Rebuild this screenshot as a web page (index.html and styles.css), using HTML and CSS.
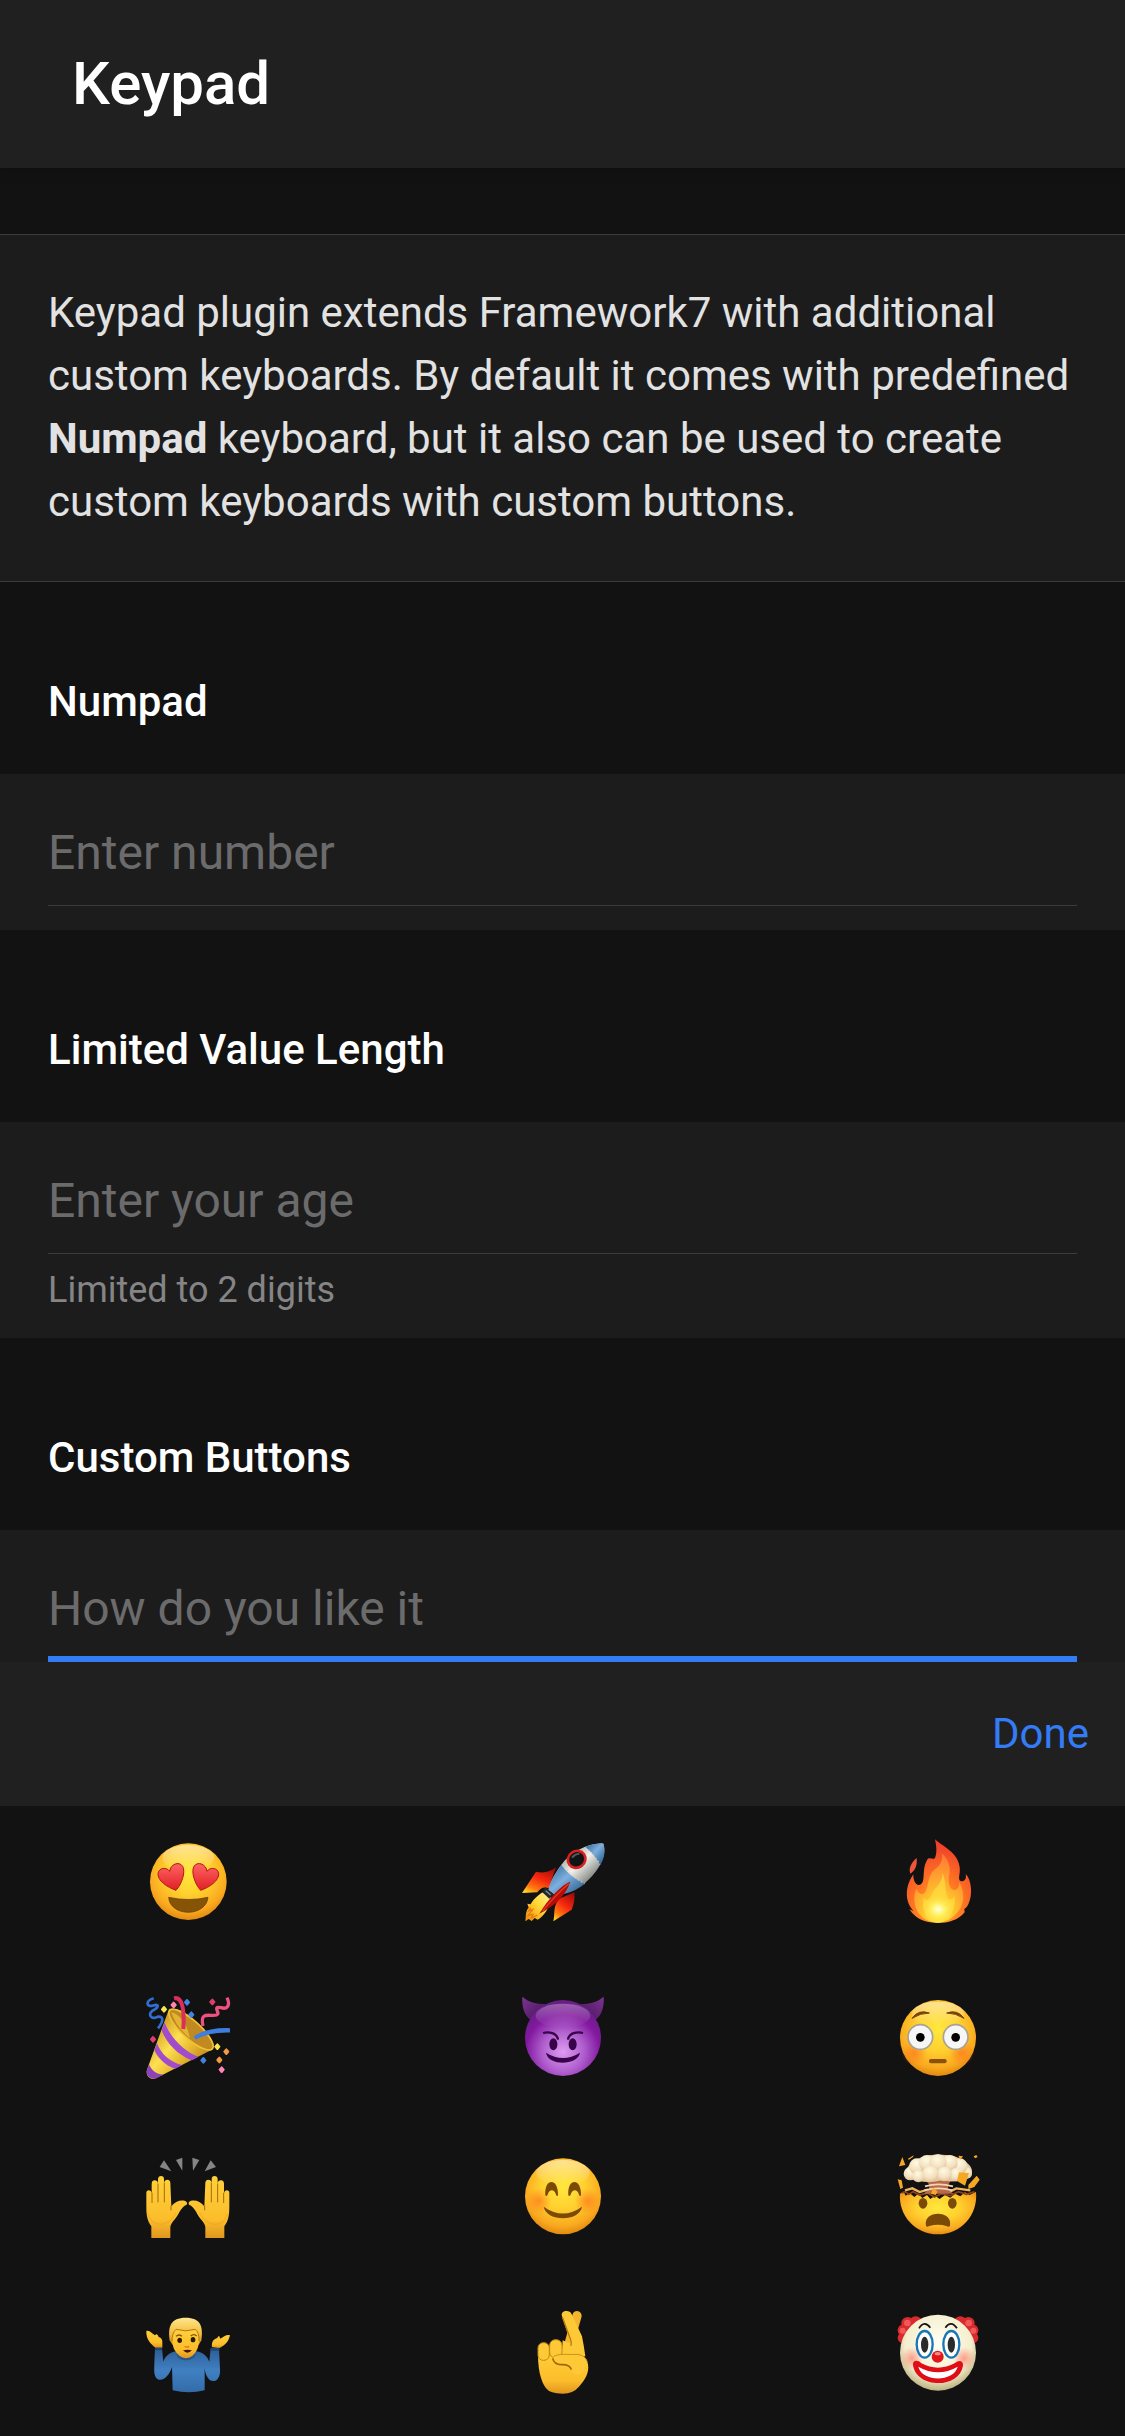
FILE: index.html
```html
<!DOCTYPE html>
<html lang="en">
<head>
    <meta charset="UTF-8">
    <meta name="viewport" content="width=device-width, initial-scale=1.0">
    <title>Keypad</title>
    <link rel="stylesheet" href="styles.css">
</head>
<body>
    <!-- gradients shared by the emoji buttons -->
    <svg class="defs" aria-hidden="true">
        <defs>
            <radialGradient id="face" cx="0.5" cy="0.38" r="0.64">
                <stop offset="0" stop-color="#ffe83c"/>
                <stop offset="0.45" stop-color="#ffd02f"/>
                <stop offset="0.8" stop-color="#faa91f"/>
                <stop offset="1" stop-color="#dc8410"/>
            </radialGradient>
            <linearGradient id="shine" x1="0" y1="0" x2="0" y2="1">
                <stop offset="0" stop-color="#fff" stop-opacity="0.5"/>
                <stop offset="1" stop-color="#fff" stop-opacity="0"/>
            </linearGradient>
            <radialGradient id="cheek">
                <stop offset="0" stop-color="#ff6a1c" stop-opacity="0.6"/>
                <stop offset="1" stop-color="#ff6a1c" stop-opacity="0"/>
            </radialGradient>
            <linearGradient id="heart" x1="0" y1="0" x2="0" y2="1">
                <stop offset="0" stop-color="#ff6464"/>
                <stop offset="1" stop-color="#e01f26"/>
            </linearGradient>
            <linearGradient id="cone" x1="0" y1="0.3" x2="0.8" y2="1">
                <stop offset="0" stop-color="#c58a18"/>
                <stop offset="0.4" stop-color="#ffe052"/>
                <stop offset="0.65" stop-color="#e4b52d"/>
                <stop offset="1" stop-color="#a97018"/>
            </linearGradient>
            <linearGradient id="hull" x1="0.2" y1="0.2" x2="0.75" y2="0.75">
                <stop offset="0" stop-color="#8d9494"/>
                <stop offset="0.5" stop-color="#f2f2ec"/>
                <stop offset="1" stop-color="#777c7a"/>
            </linearGradient>
            <linearGradient id="steel" x1="0" y1="0" x2="1" y2="1">
                <stop offset="0" stop-color="#2d6092"/>
                <stop offset="0.45" stop-color="#7db0de"/>
                <stop offset="1" stop-color="#1d4f80"/>
            </linearGradient>
            <linearGradient id="fin" x1="0.8" y1="0" x2="0.2" y2="1">
                <stop offset="0" stop-color="#a30c08"/>
                <stop offset="0.45" stop-color="#f7290f"/>
                <stop offset="0.8" stop-color="#ff7a10"/>
                <stop offset="1" stop-color="#ffd026"/>
            </linearGradient>
            <linearGradient id="jet" x1="1" y1="0" x2="0" y2="1">
                <stop offset="0" stop-color="#fff3a0"/>
                <stop offset="0.5" stop-color="#ffd52e"/>
                <stop offset="1" stop-color="#f08a10"/>
            </linearGradient>
            <radialGradient id="devil" cx="0.5" cy="0.68" r="0.68">
                <stop offset="0" stop-color="#dc9cf0"/>
                <stop offset="0.4" stop-color="#b05fce"/>
                <stop offset="0.72" stop-color="#82189f"/>
                <stop offset="1" stop-color="#642081"/>
            </radialGradient>
            <linearGradient id="horn" x1="0" y1="0" x2="1" y2="1">
                <stop offset="0" stop-color="#7d3492"/>
                <stop offset="1" stop-color="#431257"/>
            </linearGradient>
            <radialGradient id="fire" cx="0.5" cy="0.85" r="0.8">
                <stop offset="0" stop-color="#ffb52e"/>
                <stop offset="0.45" stop-color="#ff7a22"/>
                <stop offset="1" stop-color="#f03e2b"/>
            </radialGradient>
            <radialGradient id="ember" cx="0.5" cy="0.9" r="0.85">
                <stop offset="0" stop-color="#fff34a"/>
                <stop offset="0.4" stop-color="#ffc02c"/>
                <stop offset="1" stop-color="#ff7c34"/>
            </radialGradient>
            <radialGradient id="glow">
                <stop offset="0" stop-color="#ffffe6"/>
                <stop offset="0.4" stop-color="#fff56e" stop-opacity="0.9"/>
                <stop offset="1" stop-color="#ffe03a" stop-opacity="0"/>
            </radialGradient>
            <linearGradient id="skin" x1="0" y1="0" x2="0" y2="1">
                <stop offset="0" stop-color="#ffd03a"/>
                <stop offset="0.7" stop-color="#fcbd2b"/>
                <stop offset="1" stop-color="#df961f"/>
            </linearGradient>
            <linearGradient id="hair" x1="0" y1="0" x2="0" y2="1">
                <stop offset="0" stop-color="#ffe78a"/>
                <stop offset="0.6" stop-color="#f2bc3c"/>
                <stop offset="1" stop-color="#c98a1b"/>
            </linearGradient>
            <linearGradient id="shirt" x1="0" y1="0" x2="0" y2="1">
                <stop offset="0" stop-color="#2d5d96"/>
                <stop offset="0.5" stop-color="#4080c2"/>
                <stop offset="1" stop-color="#336ba8"/>
            </linearGradient>
            <radialGradient id="puff" cx="0.45" cy="0.3" r="0.75">
                <stop offset="0" stop-color="#fffae2"/>
                <stop offset="0.6" stop-color="#f3e1c0"/>
                <stop offset="1" stop-color="#dcbc94"/>
            </radialGradient>
            <radialGradient id="clown" cx="0.5" cy="0.4" r="0.62">
                <stop offset="0" stop-color="#fffff4"/>
                <stop offset="0.7" stop-color="#f5efcf"/>
                <stop offset="1" stop-color="#b5ab78"/>
            </radialGradient>
            <radialGradient id="blush">
                <stop offset="0" stop-color="#ff7a6a" stop-opacity="0.7"/>
                <stop offset="1" stop-color="#ff7a6a" stop-opacity="0"/>
            </radialGradient>
        </defs>
    </svg>

    <div class="page">
        <header class="navbar">
            <h1 class="navbar-title">Keypad</h1>
        </header>

        <main class="page-content">
            <div class="block">
                <p>Keypad plugin extends Framework7 with additional custom keyboards. By default it comes with predefined <b>Numpad</b> keyboard, but it also can be used to create custom keyboards with custom buttons.</p>
            </div>

            <label class="block-title" for="numpad">Numpad</label>
            <div class="list">
                <input type="text" id="numpad" class="item-input" placeholder="Enter number" readonly>
            </div>

            <label class="block-title" for="age">Limited Value Length</label>
            <div class="list">
                <input type="text" id="age" class="item-input" placeholder="Enter your age" maxlength="2" aria-describedby="ageInfo" readonly>
                <div class="item-info" id="ageInfo">Limited to 2 digits</div>
            </div>

            <label class="block-title" for="custom">Custom Buttons</label>
            <div class="list">
                <input type="text" id="custom" class="item-input item-input-focused" placeholder="How do you like it" readonly>
            </div>
        </main>

        <section class="keypad" aria-label="Custom keypad">
            <div class="toolbar">
                <a href="#" class="link">Done</a>
            </div>
            <div class="keypad-buttons">
                <button type="button" class="keypad-button" aria-label="Heart eyes">
                    <svg class="emoji" viewBox="60 50 288 288">
                        <circle cx="205" cy="184" r="115" fill="url(#face)"/>
                        <ellipse cx="205" cy="112" rx="78" ry="38" fill="url(#shine)"/>
                        <path id="eyeHeart" d="M168 210C142 201 112 181 114 159C117 141 141 140 149 153C151 132 177 121 188 138C198 156 184 193 168 210Z" fill="url(#heart)" stroke="#b3160f" stroke-width="3"/>
                        <use href="#eyeHeart" transform="translate(410 0) scale(-1 1)"/>
                        <path d="M146 231Q205 244 264 231C262 258 235 276 205 276C174 276 147 258 146 231Z" fill="#855407" stroke="#5e3a04" stroke-width="2"/>
                    </svg>
                </button>
                <button type="button" class="keypad-button" aria-label="Rocket">
                    <svg class="emoji" viewBox="45 50 288 288">
                        <path d="M128 216C112 226 98 240 92 252L82 250L86 262C76 272 78 288 76 303L86 296L95 302L104 293L113 298C132 288 152 256 154 232Z" fill="url(#jet)"/>
                        <path d="M92 262L86 272L98 268L84 286L99 282L94 294L112 284" fill="none" stroke="#e87b0c" stroke-width="4"/>
                        <path d="M168 141C145 158 128 158 108 154L66 218L112 216Q126 196 146 204Z" fill="url(#fin)"/>
                        <path d="M223 216Q226 244 215 268L160 303C166 276 158 262 176 236Z" fill="url(#fin)"/>
                        <path d="M136 200L162 222L148 235L127 216Z" fill="#20292e"/>
                        <path d="M137 211L152 224" stroke="#7e8a90" stroke-width="4"/>
                        <path d="M310 70C270 66 212 92 182 136C162 163 148 190 146 208L166 224C204 220 242 202 264 180C302 142 320 105 310 70Z" fill="url(#hull)"/>
                        <path d="M184 134C162 165 148 190 146 208L166 224C200 221 230 211 254 190Q212 172 184 134Z" fill="url(#steel)"/>
                        <path d="M310 70C292 68 274 72 256 80Q283 102 301 134C316 108 316 86 310 70Z" fill="url(#steel)"/>
                        <path d="M187 132Q214 170 254 190M256 82Q282 102 300 132" fill="none" stroke="#d3cfae" stroke-width="4" stroke-dasharray="3 8"/>
                        <path d="M211 184C186 193 146 232 118 280C158 260 196 230 211 184Z" fill="#b40d08"/>
                        <path d="M206 190Q164 226 128 272" fill="none" stroke="#e83a20" stroke-width="4"/>
                        <ellipse cx="230" cy="117" rx="27" ry="25" transform="rotate(-35 230 117)" fill="#101414" stroke="#d92020" stroke-width="8"/>
                        <path d="M216 112Q224 101 238 100" fill="none" stroke="#515b5b" stroke-width="6"/>
                    </svg>
                </button>
                <button type="button" class="keypad-button" aria-label="Fire">
                    <svg class="emoji" viewBox="45 50 288 288">
                        <path d="M125 113C108 127 100 145 106 160C122 150 127 133 125 113Z" fill="#f0553a"/>
                        <path d="M180 57C205 80 248 96 254 140C257 162 246 178 258 183C270 184 275 174 272 161C290 178 294 224 280 252Q276 262 268 266L269 276C250 300 218 308 190 308C158 308 124 300 103 267L116 272C92 250 86 204 115 162C114 182 124 200 138 192C152 180 140 148 155 121C162 106 172 121 180 113C187 96 184 76 180 57Z" fill="url(#fire)"/>
                        <path d="M200 99C224 120 228 146 222 168C218 190 226 214 243 208C252 202 254 192 251 184C270 210 270 248 248 276Q224 305 190 307C154 307 124 286 119 248C116 226 120 214 125 206C132 226 148 226 154 208C162 184 160 164 178 148C198 136 204 118 200 99Z" fill="url(#ember)"/>
                        <path d="M203 158C216 190 208 212 218 232Q226 244 238 228C246 262 222 304 190 307C154 304 138 270 146 232Q156 248 168 228C174 204 202 194 203 158Z" fill="#ffe044" opacity="0.65"/>
                        <ellipse cx="190" cy="267" rx="48" ry="40" fill="url(#glow)"/>
                    </svg>
                </button>

                <button type="button" class="keypad-button" aria-label="Party popper">
                    <svg class="emoji" viewBox="60 523 288 288">
                        <path d="M147 568L81 750C76 768 92 782 108 776L274 691C292 678 270 650 240 620Q180 558 147 568Z" fill="url(#cone)"/>
                        <path d="M134 608C148 650 196 700 236 711L216 722C172 706 138 668 125 632Z" fill="#a04ccc"/>
                        <path d="M111 671C122 702 150 728 186 736L166 747C134 738 112 712 103 692Z" fill="#a04ccc"/>
                        <path d="M87 734C94 752 108 764 130 765L108 776C92 780 76 768 81 750Z" fill="#8e42ba"/>
                        <ellipse cx="213" cy="630" rx="86" ry="27" transform="rotate(42 213 630)" fill="#c08a20" stroke="#f0c23a" stroke-width="5"/>
                        <path d="M154 578Q196 590 210 656Q168 622 154 578Z" fill="#e3b433"/>
                        <path d="M162 536C186 530 194 566 190 628" fill="none" stroke="#db2e5a" stroke-width="12"/>
                        <path d="M224 655Q264 630 330 632" fill="none" stroke="#3f7ddf" stroke-width="13"/>
                        <path d="M101 536C76 544 78 562 98 558C122 550 114 566 97 573C80 588 98 600 114 591C136 590 126 610 114 626" fill="none" stroke="#326ed2" stroke-width="8"/>
                        <path d="M321 534C332 558 322 570 303 564C274 558 304 582 290 586C272 592 238 572 249 619" fill="none" stroke="#ee5081" stroke-width="10"/>
                        <g stroke-linejoin="round" stroke-width="6">
                            <path d="M201 541l6 7-6 7-6-7zM214 578l6 7-6 7-6-7zM250 715l6 7-6 7-6-7z" fill="#4184e4" stroke="#4184e4"/>
                            <path d="M132 562l6 7-6 7-6-7zM292 674l6 7-6 7-6-7z" fill="#f7e84b" stroke="#f7e84b"/>
                            <path d="M161 549l6 7-6 7-6-7zM305 743l6 7-6 7-6-7z" fill="#ff86b5" stroke="#ff86b5"/>
                            <path d="M277 540l6 7-6 7-6-7zM99 652l6 7-6 7-6-7z" fill="#dc3f68" stroke="#dc3f68"/>
                            <path d="M319 689l6 7-6 7-6-7zM298 714l6 7-6 7-6-7z" fill="#f39a40" stroke="#f39a40"/>
                        </g>
                    </svg>
                </button>
                <button type="button" class="keypad-button" aria-label="Smiling devil">
                    <svg class="emoji" viewBox="45 523 288 288">
                        <path id="hornLeft" d="M67 531C65 560 72 588 94 602L138 553C108 553 86 547 67 531Z" fill="url(#horn)"/>
                        <use href="#hornLeft" transform="translate(378 0) scale(-1 1)"/>
                        <circle cx="189" cy="655" r="114" fill="url(#devil)"/>
                        <ellipse cx="189" cy="588" rx="82" ry="36" fill="url(#shine)" opacity="0.6"/>
                        <path d="M129 640C146 635 172 640 174 660M249 640C232 635 206 640 204 660" fill="none" stroke="#390349" stroke-width="7"/>
                        <ellipse cx="160" cy="674" rx="12" ry="18" fill="#390349"/>
                        <ellipse cx="218" cy="674" rx="12" ry="18" fill="#390349"/>
                        <path d="M138 699Q189 731 240 699C234 738 144 740 138 699Z" fill="#390349"/>
                    </svg>
                </button>
                <button type="button" class="keypad-button" aria-label="Flushed face">
                    <svg class="emoji" viewBox="45 523 288 288">
                        <circle cx="189" cy="655" r="114" fill="url(#face)"/>
                        <ellipse cx="189" cy="582" rx="78" ry="36" fill="url(#shine)"/>
                        <circle cx="118" cy="700" r="38" fill="url(#cheek)"/>
                        <circle cx="260" cy="700" r="38" fill="url(#cheek)"/>
                        <path d="M111 596Q130 568 163 580Q136 580 111 596ZM267 596Q248 568 215 580Q242 580 267 596Z" fill="#764207" stroke="#764207" stroke-width="3"/>
                        <circle cx="136" cy="652" r="37" fill="#f6f6f6" stroke="#a5a299" stroke-width="5"/>
                        <circle cx="242" cy="652" r="37" fill="#f6f6f6" stroke="#a5a299" stroke-width="5"/>
                        <circle cx="136" cy="653" r="13"/>
                        <circle cx="242" cy="653" r="13"/>
                        <rect x="162" y="718" width="53" height="13" rx="6" fill="#8a520c"/>
                    </svg>
                </button>

                <button type="button" class="keypad-button" aria-label="Raising hands">
                    <svg class="emoji" viewBox="60 65 288 288">
                        <path d="M132 90L119 110L154 123ZM187 82L168 89L187 121ZM217 82L238 89L219 121ZM272 90L288 110L254 123Z" fill="#858585"/>
                        <g id="handLeft">
                            <path d="M94 323V288C82 272 79 255 79 230V188Q79 180 87 180Q94 180 95 188V160Q96 150 104 150Q113 150 114 160V147Q115 137 123 137Q132 137 132 147V157Q134 148 142 148Q151 149 151 158L154 228C165 213 180 208 194 211Q204 214 200 223C182 230 178 250 165 266Q152 280 151 290V323Z" fill="url(#skin)"/>
                            <path d="M96 187V218M114 160V216M133 157V216M153 226V240" fill="none" stroke="#a26b0c" stroke-width="3"/>
                            <path d="M84 248Q90 280 122 282Q151 280 168 248" fill="none" stroke="#eda21c" stroke-width="4" opacity="0.5"/>
                        </g>
                        <use href="#handLeft" transform="translate(407 0) scale(-1 1)"/>
                    </svg>
                </button>
                <button type="button" class="keypad-button" aria-label="Smiling face">
                    <svg class="emoji" viewBox="45 65 288 288">
                        <circle cx="189" cy="198" r="114" fill="url(#face)"/>
                        <ellipse cx="189" cy="127" rx="80" ry="38" fill="url(#shine)"/>
                        <circle cx="116" cy="212" r="38" fill="url(#cheek)"/>
                        <circle cx="262" cy="212" r="38" fill="url(#cheek)"/>
                        <path d="M136 195C132 142 176 142 174 195Q170 200 167 190C163 176 148 176 144 190Q141 200 136 195ZM205 195C201 142 245 142 243 195Q239 200 236 190C232 176 217 176 213 190Q210 200 205 195Z" fill="#7b4b06"/>
                        <path d="M131 229Q189 270 246 229C238 275 140 275 131 229Z" fill="#7b4b06"/>
                    </svg>
                </button>
                <button type="button" class="keypad-button" aria-label="Exploding head">
                    <svg class="emoji" viewBox="45 65 288 288">
                        <path d="M75 190L86 184L92 196L104 188L118 200L130 190L142 203L156 194L166 206L180 196L194 206L210 194L226 202L240 190L256 198L270 186L284 194L303 184C310 254 258 312 189 312C120 312 70 254 75 190Z" fill="url(#face)"/>
                        <path d="M80 188L90 184L102 192L114 184L134 194L158 188L178 200L200 190L226 196L250 184L274 192L298 184" fill="none" stroke="#8c441a" stroke-width="5"/>
                        <path d="M90 180L112 174L134 185L158 178M220 186L244 174L286 180" fill="none" stroke="#efb45e" stroke-width="7"/>
                        <path d="M146 146H232Q216 160 220 180L236 190H146L162 176Q168 160 146 146Z" fill="#b9694a"/>
                        <path d="M150 168Q190 156 234 168M148 180Q190 168 232 180" fill="none" stroke="#f2d6b6" stroke-width="5"/>
                        <path d="M92 140Q88 110 116 94Q150 70 189 74Q236 70 268 92Q300 112 288 140Q244 160 200 150Q150 164 92 140Z" fill="#e5c8a0"/>
                        <g fill="url(#puff)">
                            <circle cx="106" cy="130" r="20"/>
                            <circle cx="273" cy="128" r="18"/>
                            <circle cx="126" cy="108" r="24"/>
                            <circle cx="254" cy="108" r="24"/>
                            <circle cx="156" cy="98" r="24"/>
                            <circle cx="224" cy="98" r="24"/>
                            <circle cx="189" cy="97" r="26"/>
                            <circle cx="130" cy="138" r="18"/>
                            <circle cx="244" cy="133" r="20"/>
                            <circle cx="208" cy="131" r="22"/>
                            <circle cx="166" cy="131" r="24"/>
                        </g>
                        <path d="M82 80L72 108L91 104ZM98 86L116 75L114 80L102 88ZM68 147L80 150L84 172L76 176ZM252 126L282 128L270 166L246 152ZM280 164L305 136L314 148L298 170L280 176ZM250 76L264 78L256 88ZM296 78L304 74L308 80L300 84ZM174 172L188 184L182 194L168 190Z" fill="#f6a823"/>
                        <ellipse cx="144" cy="219" rx="13" ry="16" fill="#7b4b06"/>
                        <ellipse cx="232" cy="219" rx="13" ry="16" fill="#7b4b06"/>
                        <path d="M153 286C148 262 168 250 189 250C210 250 230 262 225 286Q222 292 214 287Q189 280 163 287Q155 292 153 286Z" fill="#7b4b06"/>
                    </svg>
                </button>

                <button type="button" class="keypad-button" aria-label="Man shrugging">
                    <svg class="emoji" viewBox="60 538 288 288">
                        <path d="M79 604C88 600 96 612 105 617C110 609 114 616 116 622C124 624 128 630 127 640V654H106C92 642 78 630 79 604Z" fill="url(#skin)"/>
                        <path d="M330 617C318 612 310 622 300 627C300 617 294 618 292 625C280 628 274 638 276 652L297 656C308 650 325 642 330 617Z" fill="url(#skin)"/>
                        <path d="M158 782L156 712C148 738 128 758 112 748C100 738 103 720 103 700L105 656H126L130 696C135 680 150 668 168 665H230C248 668 262 680 268 696L272 656H297L300 720C302 748 284 762 268 750Q256 738 254 715V782Q206 794 158 782Z" fill="url(#shirt)"/>
                        <path d="M105 654H126V662H105ZM272 654H298V663H272Z" fill="#22466f"/>
                        <path d="M166 665Q196 706 231 665L222 684Q197 700 174 684Z" fill="#29558a"/>
                        <path d="M149 632C143 590 152 564 197 564C242 564 250 590 244 632L236 646H158Z" fill="url(#hair)"/>
                        <path d="M157 614Q155 640 162 658Q176 684 198 686Q220 684 232 658Q239 640 237 612L226 600Q198 608 168 599Z" fill="url(#skin)"/>
                        <path d="M156 634Q156 610 168 599Q198 608 226 599Q238 608 237 634" fill="none" stroke="#b27814" stroke-width="3"/>
                        <path d="M168 620Q178 612 186 620M212 619Q222 611 230 619" fill="none" stroke="#865108" stroke-width="4"/>
                        <ellipse cx="179" cy="632" rx="7" ry="8" fill="#2b1a09"/>
                        <ellipse cx="219" cy="630" rx="7" ry="8" fill="#2b1a09"/>
                        <path d="M194 650Q200 655 207 650" fill="none" stroke="#d0811a" stroke-width="4"/>
                        <path d="M189 662Q203 658 216 662Q202 676 189 662Z" fill="#46120a"/>
                    </svg>
                </button>
                <button type="button" class="keypad-button" aria-label="Crossed fingers">
                    <svg class="emoji" viewBox="45 538 288 288">
                        <path d="M231 558L200 668" stroke="#f3b52c" stroke-width="28" stroke-linecap="round"/>
                        <path d="M186 560C180 540 212 540 215 554L246 620Q252 650 256 680L184 690L188 632Q202 640 212 640Z" fill="#fdc936"/>
                        <path d="M187 562L212 630Q216 648 211 648" fill="none" stroke="#b9780e" stroke-width="4"/>
                        <path d="M114 660Q112 740 138 776Q150 792 188 792Q220 792 236 772C256 750 268 730 264 704Q260 676 232 674H180Z" fill="url(#skin)"/>
                        <rect x="149" y="630" width="37" height="55" rx="17" fill="#fdc936" stroke="#c68616" stroke-width="3"/>
                        <rect x="114" y="639" width="34" height="53" rx="16" fill="#fdc936" stroke="#c68616" stroke-width="3"/>
                        <path d="M158 686C164 670 204 676 232 674C258 678 262 704 248 726C236 744 210 728 214 714Q208 704 180 704Q164 702 158 686Z" fill="#fdc936"/>
                        <path d="M158 686Q162 704 184 705Q210 704 214 720" fill="none" stroke="#a4660a" stroke-width="5"/>
                        <path d="M160 682C172 670 204 676 232 674Q254 676 262 696" fill="none" stroke="#cf9018" stroke-width="3"/>
                    </svg>
                </button>
                <button type="button" class="keypad-button" aria-label="Clown face">
                    <svg class="emoji" viewBox="45 538 288 288">
                        <g id="curls" fill="#d92a2e">
                            <circle cx="122" cy="580" r="20"/>
                            <circle cx="98" cy="581" r="19"/>
                            <circle cx="86" cy="602" r="18"/>
                            <circle cx="84" cy="624" r="16"/>
                            <circle cx="97" cy="580" r="10" fill="#f0585a"/>
                            <circle cx="83" cy="603" r="9" fill="#f0585a"/>
                        </g>
                        <use href="#curls" transform="translate(378 0) scale(-1 1)"/>
                        <circle cx="189" cy="669" r="114" fill="url(#clown)"/>
                        <circle cx="110" cy="686" r="34" fill="url(#blush)"/>
                        <circle cx="268" cy="686" r="34" fill="url(#blush)"/>
                        <path d="M132 596Q148 570 166 594M211 594Q228 570 246 596" fill="none" stroke="#151515" stroke-width="5"/>
                        <ellipse cx="149" cy="644" rx="24" ry="40" fill="#fff" stroke="#1877b8" stroke-width="7"/>
                        <ellipse cx="229" cy="644" rx="24" ry="40" fill="#fff" stroke="#1877b8" stroke-width="7"/>
                        <ellipse cx="149" cy="645" rx="11" ry="24" fill="#2b2b2b"/>
                        <ellipse cx="229" cy="645" rx="11" ry="24" fill="#2b2b2b"/>
                        <path d="M114 706C112 690 130 690 138 700Q189 728 240 700C250 690 266 692 264 708C254 778 124 778 114 706Z" fill="#e00d16"/>
                        <path d="M130 711Q189 745 248 711C236 758 142 758 130 711Z" fill="#fff"/>
                        <circle cx="188" cy="681" r="18" fill="#e0181c"/>
                        <ellipse cx="188" cy="672" rx="9" ry="5" fill="#ff8c84"/>
                    </svg>
                </button>
            </div>
        </section>
    </div>
</body>
</html>
```
FILE: styles.css
```css
* {
    box-sizing: border-box;
}
body {
    margin: 0;
    background-color: #121212;
    color: #fff;
    font-family: Roboto, Arial, sans-serif;
    font-size: 42px;
}
.defs {
    position: absolute;
    width: 0;
    height: 0;
}
.page {
    display: flex;
    flex-direction: column;
    height: 100vh;
}
.navbar {
    display: flex;
    flex-shrink: 0;
    align-items: center;
    height: 168px;
    padding: 0 72px 2px;
    background-color: #202020;
    box-shadow: 0 3px 12px rgba(0, 0, 0, 0.2);
}
.navbar-title {
    margin: 0;
    font-size: 60px;
    font-weight: 500;
}
.page-content {
    flex: 1;
    min-height: 0;
    padding-top: 66px;
    overflow: hidden;
}
.block {
    padding: 46px 48px 48px;
    background-color: #1c1c1d;
    border-top: 1px solid #3b3b3c;
    border-bottom: 1px solid #3b3b3c;
    line-height: 63px;
    color: #e2e2e2;
}
.block p {
    margin: 0;
}
.block-title {
    display: block;
    margin: 96px 48px 48px;
    font-weight: 500;
    line-height: 48px;
}
.list {
    padding: 24px 48px;
    background-color: #1c1c1d;
}
.item-input {
    display: block;
    width: 100%;
    height: 108px;
    padding: 0;
    border: 0;
    border-radius: 0;
    outline: 0;
    background: transparent;
    box-shadow: inset 0 -1px #3b3b3c;
    color: #fff;
    font-family: inherit;
    font-size: 48px;
}
.item-input::placeholder {
    color: #6b6b6c;
    opacity: 1;
}
.item-input-focused {
    box-shadow: inset 0 -6px #347bf6;
}
.item-info {
    padding-top: 12px;
    font-size: 36px;
    line-height: 48px;
    color: #858586;
}

/* keypad */
.keypad {
    flex-shrink: 0;
}
.toolbar {
    display: flex;
    align-items: center;
    justify-content: flex-end;
    height: 144px;
    padding: 0 36px 2px;
    background-color: #202020;
}
.link {
    color: #347bf6;
    text-decoration: none;
}
.keypad-buttons {
    display: grid;
    grid-template-columns: repeat(3, 1fr);
    grid-template-rows: repeat(4, 1fr);
    height: 630px;
}
.keypad-button {
    display: flex;
    align-items: center;
    justify-content: center;
    padding: 0;
    border: 0;
    background: transparent;
    cursor: pointer;
}
.emoji {
    width: 96px;
    height: 96px;
}
```
